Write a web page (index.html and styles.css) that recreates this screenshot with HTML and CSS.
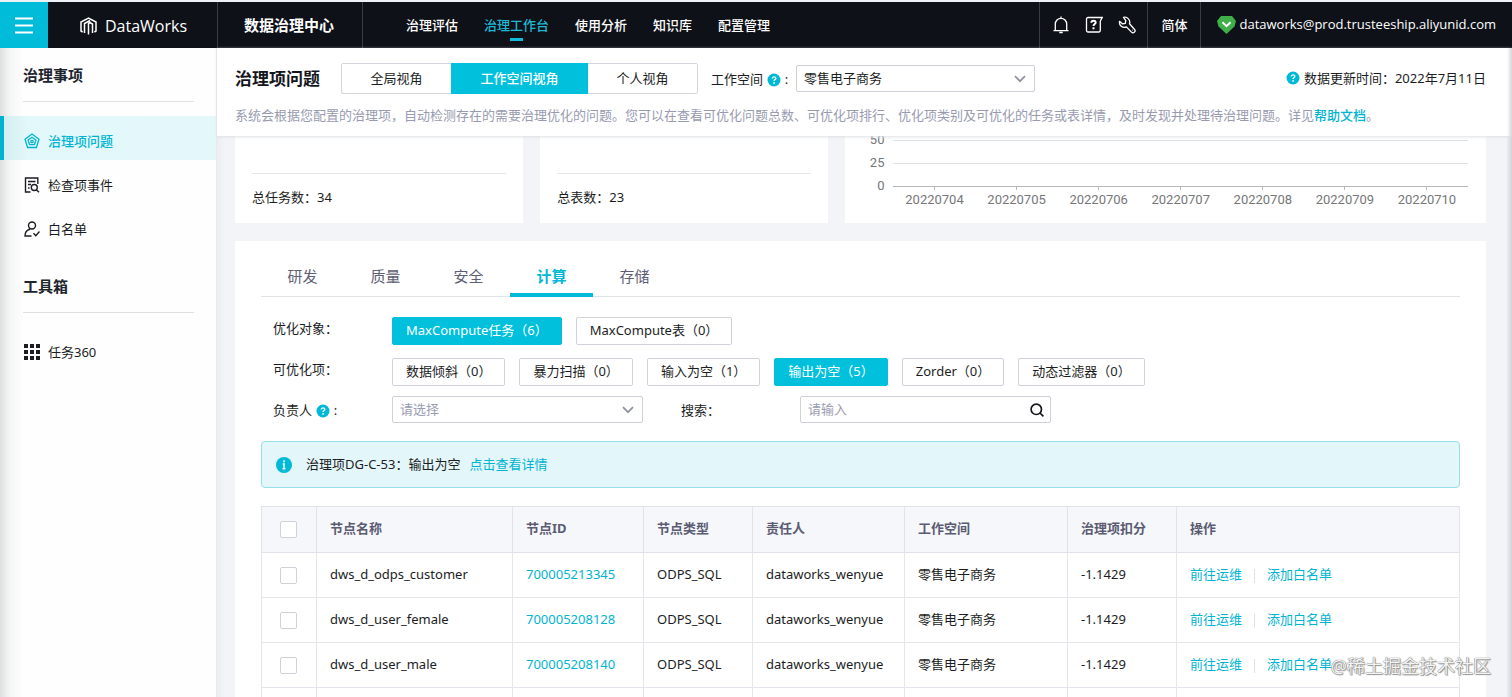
FILE: index.html
```html
<!DOCTYPE html>
<html lang="zh-CN">
<head>
<meta charset="utf-8">
<title>DataWorks 数据治理中心</title>
<link rel="stylesheet" href="styles.css">
</head>
<body>
<svg class="defs" width="0" height="0" aria-hidden="true">
  <symbol id="help" viewBox="0 0 14 14"><circle cx="7" cy="7" r="6.5" fill="#00b9d6"/><path d="M5.2 5.6c0-2.4 3.6-2.3 3.6-.2 0 1.2-1.7 1.2-1.7 2.6" fill="none" stroke="#fff" stroke-width="1.3"/><circle cx="7.1" cy="9.9" r=".9" fill="#fff"/></symbol>
  <symbol id="chevron" viewBox="0 0 12 8"><path d="M1 1.2l5 5 5-5" fill="none" stroke="#8f929e" stroke-width="1.7"/></symbol>
</svg>
<header class="topbar">
  <button class="menu" aria-label="菜单"><svg width="18" height="17" viewBox="0 0 18 17"><path d="M0 1.5h18M0 8.5h18M0 15.5h18" stroke="#fff" stroke-width="2"/></svg></button>
  <a class="brand" href="#">
    <svg width="17" height="18" viewBox="0 0 17 18" fill="none" stroke="#fff" stroke-width="1.5"><path d="M2.600 15L1 14V5l7.500-4 7.500 4v9l-1.600 1M4.500 16V6.500L10 3.500M8.500 17.500V8.500M8.500 9V6.500l2.300-1.300M12.500 16V7L8.700 5"/></svg>
    <span>DataWorks</span>
  </a>
  <div class="product">数据治理中心</div>
  <nav class="topnav">
    <a href="#">治理评估</a><a href="#" class="current">治理工作台</a><a href="#">使用分析</a><a href="#">知识库</a><a href="#">配置管理</a>
  </nav>
  <div class="tools">
    <button aria-label="通知"><svg width="18" height="18" viewBox="0 0 18 18" fill="none" stroke="#fff" stroke-width="1.3"><path d="M1.500 14.700h15M3.300 14.500V8a5.700 5.700 0 0 1 11.400 0v6.500M9 .5v2M7.300 16.500h3.400"/></svg></button>
    <button aria-label="帮助"><svg width="18" height="18" viewBox="0 0 18 18" fill="none" stroke="#fff" stroke-width="1.3"><path d="M15.300 5v9.500a1.500 1.500 0 0 1-1.500 1.500H3a1.500 1.500 0 0 1-1.500-1.500V3A1.500 1.500 0 0 1 3 1.500h14.200L15.300 5"/><path d="M6.300 6.700c0-2.700 4.400-2.600 4.400-.2 0 1.600-2.200 1.500-2.200 3.600" stroke-width="1.900"/><path d="M8.500 11.300v2" stroke-width="2"/></svg></button>
    <button aria-label="工具"><svg width="18" height="18" viewBox="0 0 18 18" fill="none" stroke="#fff" stroke-width="1.300" stroke-linejoin="round"><path d="M5.500 1.400a5 5 0 0 1 6 6.400l4.900 5.400a2 2 0 0 1-2.900 2.900L8.400 10.900a5 5 0 0 1-6.900-5.600l3.200 2.600 2.600-.6.500-2.600z"/><path d="M14.300 14.200h.6"/></svg></button>
  </div>
  <button class="lang">简体</button>
  <a class="account" href="#">
    <svg width="19" height="18" viewBox="0 0 19 18"><path d="M4 0h11l4 5-1.500 5.500L9.500 18 1.500 10.500 0 5z" fill="#3fb049"/><path d="M5.500 6.200l4 4 4-4" fill="none" stroke="#fff" stroke-width="2"/></svg>
    <span>dataworks@prod.trusteeship.aliyunid.com</span>
  </a>
</header>
<div class="body">
  <aside class="sidebar">
    <h2>治理事项</h2>
    <nav class="sidenav">
      <a href="#" class="active"><svg width="16" height="16" viewBox="0 0 16 16" fill="none" stroke="currentColor" stroke-width="1.3" stroke-linejoin="round"><path d="M8 1l7 5.200-2.600 8.300H3.600L1 6.200zM8 4.200l3.900 2.900-1.500 4.600H5.600L4.100 7.100z"/><circle cx="8" cy="8.500" r="1.200"/></svg>治理项问题</a>
      <a href="#"><svg width="16" height="16" viewBox="0 0 16 16" fill="none" stroke="currentColor" stroke-width="1.400"><path d="M6.500 15H1.500V1h12.300v6M4 4.500h7.500M4 7.500h3M4 11h1.500"/><circle cx="10.300" cy="10.500" r="3"/><path d="M12.300 12.700l2.700 2.600"/></svg>检查项事件</a>
      <a href="#"><svg width="16" height="16" viewBox="0 0 16 16" fill="none" stroke="currentColor" stroke-width="1.400"><circle cx="8" cy="4.500" r="3.500"/><path d="M7.500 15H1c0-3.500 2-6 5-6.700M9.500 12.300l2.300 2.400 3.700-4.200M5.800 7.500L4.500 9"/></svg>白名单</a>
    </nav>
    <h2>工具箱</h2>
    <nav class="sidenav">
      <a href="#"><svg width="16" height="16" viewBox="0 0 16 16" fill="currentColor"><path d="M0 0h4v4H0zM6 0h4v4H6zM12 0h4v4h-4zM0 6h4v4H0zM6 6h4v4H6zM12 6h4v4h-4zM0 12h4v4H0zM6 12h4v4H6zM12 12h4v4h-4z"/></svg>任务360</a>
    </nav>
  </aside>
  <main class="main">
    <section class="pagehead">
      <div class="headrow">
        <h1>治理项问题</h1>
        <div class="segment"><button>全局视角</button><button class="on">工作空间视角</button><button>个人视角</button></div>
        <label class="spacelabel" for="space">工作空间 <svg class="help" width="14" height="14"><use href="#help"/></svg> :</label>
        <div class="select space"><select id="space"><option>零售电子商务</option></select><svg width="12" height="8"><use href="#chevron"/></svg></div>
        <div class="updated"><svg width="14" height="14"><use href="#help"/></svg><span>数据更新时间：2022年7月11日</span></div>
      </div>
      <p class="desc">系统会根据您配置的治理项，自动检测存在的需要治理优化的问题。您可以在查看可优化问题总数、可优化项排行、优化项类别及可优化的任务或表详情，及时发现并处理待治理问题。详见<a href="#">帮助文档</a>。</p>
    </section>
    <div class="content">
      <div class="cards">
        <div class="card stat"><p>总任务数：34</p></div>
        <div class="card stat"><p>总表数：23</p></div>
        <div class="card chart">
          <div class="ylabels"><span>50</span><span>25</span><span>0</span></div>
          <div class="plot">
            <div class="gridline"></div><div class="gridline"></div><div class="gridline axis"></div>
            <div class="xlabels"><span>20220704</span><span>20220705</span><span>20220706</span><span>20220707</span><span>20220708</span><span>20220709</span><span>20220710</span></div>
          </div>
        </div>
      </div>
      <section class="panel">
        <div class="tabs"><button>研发</button><button>质量</button><button>安全</button><button class="on">计算</button><button>存储</button></div>
        <div class="filters">
          <div class="frow"><span class="flabel">优化对象：</span><div class="chips"><button class="on">MaxCompute任务（6）</button><button>MaxCompute表（0）</button></div></div>
          <div class="frow"><span class="flabel">可优化项：</span><div class="chips"><button>数据倾斜（0）</button><button>暴力扫描（0）</button><button>输入为空（1）</button><button class="on">输出为空（5）</button><button>Zorder（0）</button><button>动态过滤器（0）</button></div></div>
          <div class="frow fields">
            <label class="flabel" for="owner">负责人 <svg class="help" width="14" height="14"><use href="#help"/></svg> :</label>
            <div class="select empty"><select id="owner"><option>请选择</option></select><svg width="12" height="8"><use href="#chevron"/></svg></div>
            <label class="flabel second" for="search">搜索：</label>
            <div class="search"><input id="search" type="text" placeholder="请输入"><svg width="14" height="14" viewBox="0 0 14 14" fill="none" stroke="#14161c" stroke-width="1.700"><circle cx="6.300" cy="6.300" r="5.200"/><path d="M10 10l3.400 3.400"/></svg></div>
          </div>
        </div>
        <div class="notice"><svg width="16" height="16" viewBox="0 0 16 16"><circle cx="8" cy="8" r="8" fill="#00b9d6"/><path d="M8 3.200v2M6.700 7H8v4.500M6.500 11.800h3" stroke="#fff" stroke-width="1.500" fill="none"/></svg><span>治理项DG-C-53：输出为空</span><a href="#">点击查看详情</a></div>
        <table>
          <colgroup><col class="c-check"><col class="c-name"><col class="c-id"><col class="c-type"><col class="c-owner"><col class="c-space"><col class="c-score"><col></colgroup>
          <thead><tr><th><input type="checkbox" aria-label="全选"></th><th>节点名称</th><th>节点ID</th><th>节点类型</th><th>责任人</th><th>工作空间</th><th>治理项扣分</th><th>操作</th></tr></thead>
          <tbody>
            <tr><td><input type="checkbox" aria-label="选择 dws_d_odps_customer"></td><td>dws_d_odps_customer</td><td><a href="#">700005213345</a></td><td>ODPS_SQL</td><td>dataworks_wenyue</td><td>零售电子商务</td><td>-1.1429</td><td><a href="#">前往运维</a><i class="sep"></i><a href="#">添加白名单</a></td></tr>
            <tr><td><input type="checkbox" aria-label="选择 dws_d_user_female"></td><td>dws_d_user_female</td><td><a href="#">700005208128</a></td><td>ODPS_SQL</td><td>dataworks_wenyue</td><td>零售电子商务</td><td>-1.1429</td><td><a href="#">前往运维</a><i class="sep"></i><a href="#">添加白名单</a></td></tr>
            <tr><td><input type="checkbox" aria-label="选择 dws_d_user_male"></td><td>dws_d_user_male</td><td><a href="#">700005208140</a></td><td>ODPS_SQL</td><td>dataworks_wenyue</td><td>零售电子商务</td><td>-1.1429</td><td><a href="#">前往运维</a><i class="sep"></i><a href="#">添加白名单</a></td></tr>
            <tr><td></td><td></td><td></td><td></td><td></td><td></td><td></td><td></td></tr>
          </tbody>
        </table>
      </section>
    </div>
  </main>
</div>
<div class="watermark">@稀土掘金技术社区</div>
</body>
</html>
```
FILE: styles.css
```css
* { box-sizing: border-box; }
body {
  margin: 0;
  height: 100vh;
  overflow: hidden;
  display: flex;
  flex-direction: column;
  border-top: 2px solid #eef1f6;
  background: #fff;
  color: #1b1d23;
  font: 13px/20px "Noto Sans", "Noto Sans CJK SC", sans-serif;
}
h1, h2, p { margin: 0; }
a { color: #00b4d2; text-decoration: none; }
button, input, select { font: inherit; color: inherit; margin: 0; }
button { border: 0; padding: 0; background: none; }
svg { flex: none; }
.defs { position: absolute; }
.help { margin-left: 1px; vertical-align: -3px; }

.topbar { flex: none; display: flex; height: 46px; background: #0e1118; color: #fff; }
.menu { width: 48px; background: #00bcd9; display: flex; align-items: center; justify-content: center; }
.brand { width: 169px; display: flex; align-items: center; gap: 8px; padding: 2px 0 0 32px; color: #fff; font-family: "Open Sans", "Noto Sans", sans-serif; font-size: 16px; font-weight: 500; }
.product { width: 145px; padding-left: 26px; border-left: 1px solid #393c43; line-height: 46px; font-size: 15px; font-weight: 700; }
.topnav { flex: 1; display: flex; gap: 26px; padding-left: 43px; border-left: 1px solid #393c43; font-weight: 500; }
.topnav a { color: #fff; line-height: 46px; }
.topnav .current { color: #1fb9d6; display: flex; flex-direction: column; align-items: center; }
.topnav .current::after { content: ""; width: 13px; height: 3px; margin-top: -10px; background: #12bad8; }
.tools { display: flex; align-items: center; gap: 15px; width: 108px; padding-left: 12px; border-left: 1px solid #393c43; }
.tools button { display: flex; }
.lang { width: 53px; border-left: 1px solid #393c43; font-weight: 500; }
.account { display: flex; align-items: center; gap: 3px; padding: 0 16px; border-left: 1px solid #393c43; color: #fff; font-family: "Open Sans", "Noto Sans", sans-serif; }
.account span { padding-bottom: 3px; }

.body { flex: 1; min-height: 0; display: flex; }
.sidebar { width: 217px; flex: none; background: linear-gradient(90deg, #dedfe0, #f6f6f7 10px, #fefefe 24px); border-right: 1px solid #e7e9ed; }
.sidebar h2 { margin: 0 22px 14px 23px; padding: 16px 0 15px; line-height: 22px; font-size: 15px; border-bottom: 1px solid #dfe1e4; color: #20242d; }
.sidenav { margin-bottom: 10px; }
.sidenav + h2 { padding-top: 17px; }
.sidenav a { display: flex; align-items: center; gap: 8px; height: 44px; padding: 5px 0 0 24px; color: #1b1d23; }
.sidenav .active { border-left: 4px solid #00b4d0; padding-left: 20px; color: #00b4d2; font-weight: 500; background: linear-gradient(90deg, #d5eeef, #e2f8fa 24px, #e4f8fa); }

.main { flex: 1; min-width: 0; display: flex; flex-direction: column; background: linear-gradient(90deg, #eceef2, #f2f4f8 8px, #f2f4f8 calc(100% - 6px), #cfd3d8); }
.pagehead { flex: none; height: 88px; padding: 15px 26px 0 18px; background: linear-gradient(90deg, #fff calc(100% - 5px), #d5d6d8); box-shadow: 0 1px 3px #dcdfe3; z-index: 1; }
.headrow { display: flex; align-items: center; height: 31px; }
h1 { width: 106px; font-size: 17px; line-height: 24px; color: #14161c; }
.segment { display: grid; grid-template-columns: 109px 137px 109px; width: 357px; height: 31px; border: 1px solid #d3d6de; border-radius: 2px; }
.segment button { padding-bottom: 2px; }
.segment .on { background: #00c0dc; color: #fff; margin: -1px 0; font-weight: 500; }
.spacelabel { width: 85px; margin-left: 13px; }
.select, .search { display: grid; grid-template-columns: 1fr 12px 8px; align-items: center; width: 251px; height: 27px; border: 1px solid #cdd0d9; border-radius: 2px; background: #fff; }
.select select { grid-area: 1 / 1 / 2 / 4; height: 25px; padding: 0 24px 2px 7px; border: 0; background: none; appearance: none; }
.select svg { grid-area: 1 / 2; pointer-events: none; }
.select.space { width: 239px; }
.select.empty { color: #9a9db0; }
.updated { margin-left: auto; display: flex; align-items: center; gap: 4px; padding-bottom: 2px; }
.desc { margin-top: 11px; color: #989bb0; white-space: nowrap; }
.desc a { font-weight: 500; }

.content { flex: 1; min-height: 0; overflow: hidden; padding: 0 26px 0 18px; }
.cards { display: grid; grid-template-columns: 9fr 9fr 20fr; gap: 17px; height: 87px; overflow: hidden; }
.card { background: #fff; display: flex; }
.stat { align-items: flex-end; padding: 0 17px; }
.stat p { flex: 1; line-height: 47px; margin-bottom: 2px; border-top: 1px solid #e4e6ea; }
.chart { height: 87px; align-items: flex-end; padding-right: 18px; font-family: Roboto, "Noto Sans", sans-serif; color: #75777a; }
.ylabels { width: 39px; padding-bottom: 26px; margin-right: 9px; display: flex; flex-direction: column; text-align: right; line-height: 23px; }
.plot { flex: 1; padding-bottom: 13px; }
.gridline { height: 23px; border-bottom: 1px solid #dfe2e2; }
.gridline.axis { border-color: #b4b8bc; }
.xlabels { display: grid; grid-template-columns: repeat(7, 1fr); text-align: center; }
.xlabels span::before { content: ""; display: block; width: 1px; height: 3px; margin: 0 auto; background: #b4b8bc; }

.panel { margin-top: 18px; padding: 14px 26px 0; background: #fff; }
.tabs { display: flex; border-bottom: 1px solid #dfe2e6; height: 42px; }
.tabs button { width: 83px; height: 42px; padding-top: 3px; font-size: 15px; color: #5d5e74; border-bottom: 4px solid transparent; }
.tabs .on { color: #00b9d6; font-weight: 700; border-color: #00bad6; }
.filters { padding: 20px 12px 18px; }
.frow { display: flex; align-items: flex-start; margin-bottom: 13px; }
.flabel { width: 119px; flex: none; line-height: 22px; }
.chips { display: flex; flex-wrap: wrap; gap: 14px; }
.chips button { height: 28px; padding: 0 13px 2px; border: 1px solid #cfd2dc; border-radius: 2px; }
.chips .on { background: #00c0dc; border-color: #00c0dc; color: #fff; }
.frow.fields { align-items: center; margin: -3px 0 0; }
.second { margin-left: 38px; }
.search { grid-template-columns: 1fr 14px 6px; }
.search input { min-width: 0; padding: 0 8px 2px 7px; border: 0; background: none; outline: 0; }
.search input::placeholder { color: #9a9db0; opacity: 1; }
.notice { display: flex; align-items: center; height: 47px; padding-left: 14px; background: #e3f6fa; border: 1px solid #96dfe8; border-radius: 4px; }
.notice span { margin: 0 9px 0 14px; }
.notice span, .notice a { padding-bottom: 2px; }

table { width: 100%; margin-top: 18px; border-collapse: collapse; table-layout: fixed; }
th, td { height: 45px; padding: 0 13px 2px; border: 1px solid #e4e5ed; text-align: left; }
th { height: 46px; padding-bottom: 4px; background: #f6f7fa; color: #5b5c73; font-weight: 700; border-color: #e1e2ea; }
.c-check { width: 55px; }
.c-name { width: 196px; }
.c-id { width: 131px; }
.c-type { width: 109px; }
.c-owner { width: 152px; }
.c-space { width: 163px; }
.c-score { width: 109px; }
th:first-child, td:first-child { padding: 0 2px 2px 0; text-align: center; }
input[type="checkbox"] { appearance: none; width: 17px; height: 17px; border: 1px solid #cfd1da; border-radius: 2px; background: #fff; vertical-align: middle; }
.sep { display: inline-block; width: 1px; height: 14px; margin: 0 12px; background: #dfe1e8; vertical-align: middle; }
.watermark { position: absolute; right: 21px; bottom: 18px; font-size: 18px; line-height: 26px; color: #f4f4f5; text-shadow: 0 0 1px #777, 0 0 1px #777, 1px 1px 1px #999; pointer-events: none; }
```
